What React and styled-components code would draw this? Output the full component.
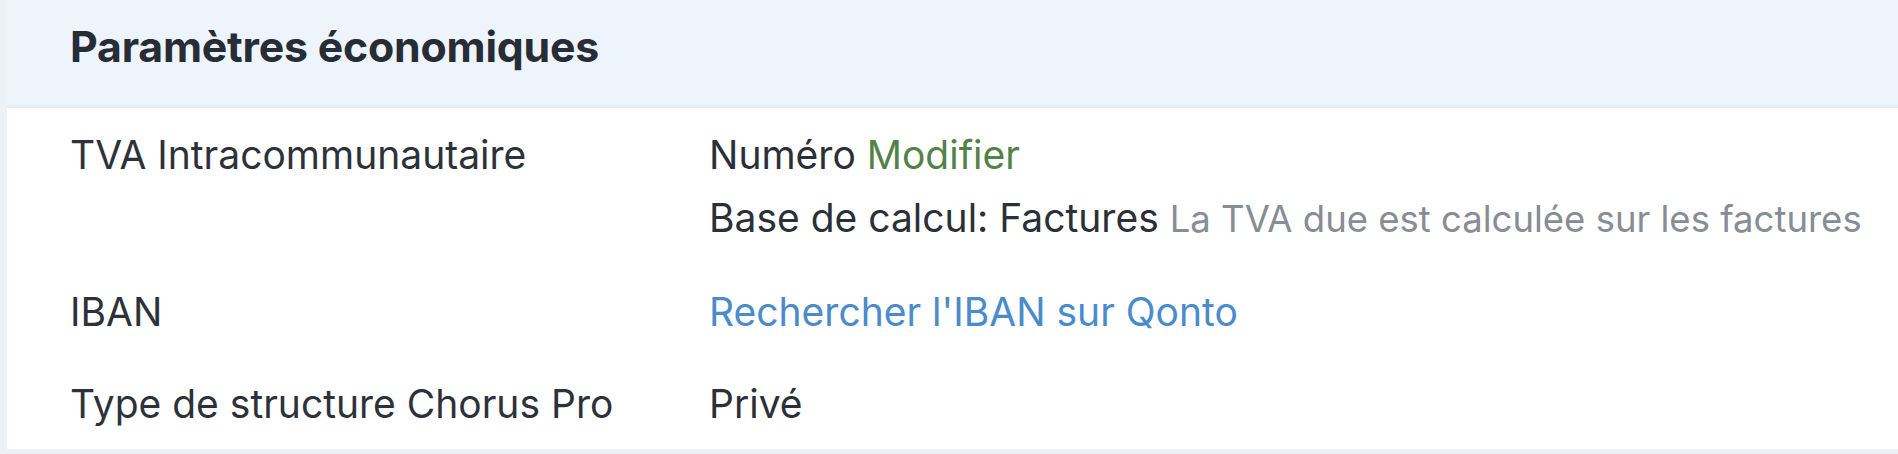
import styled, { createGlobalStyle } from 'styled-components';

const GlobalStyle = createGlobalStyle`
  html, body {
    margin: 0;
    padding: 0;
    background: #ffffff;
  }

  body {
    font-family: Inter, "Noto Sans", sans-serif;
    -webkit-font-smoothing: antialiased;
  }
`;

const Page = styled.div`
  display: flex;
  width: 1898px;
  height: 454px;
  box-sizing: border-box;
  padding: 0 0 5px 7px;
  background-color: #eef2f7;
`;

const Card = styled.section`
  display: flex;
  flex: 1;
  flex-direction: column;
  background-color: #fff;
`;

const Header = styled.header`
  flex-shrink: 0;
  height: 108px;
  box-sizing: border-box;
  padding: 15px 63px 0;
  border-bottom: 3px solid #e6edf5;
  background-color: #edf4fc;
`;

const Title = styled.h2`
  margin: 0;
  color: #272c35;
  font-size: 42.8px;
  font-weight: 700;
  line-height: 63px;
  letter-spacing: -0.2px;
`;

const Rows = styled.div`
  display: flex;
  flex-direction: column;
`;

const Row = styled.div`
  display: grid;
  grid-template-columns: 639px 1fr;
  padding: 14.5px 63px;
  font-size: 39px;
  line-height: 63px;
`;

const Label = styled.div`
  color: #2d323a;
`;

const Value = styled.div`
  display: flex;
  flex-direction: column;
  color: #2b3038;
`;

const Line = styled.p`
  margin: 0;
  white-space: nowrap;
`;

const Link = styled.a`
  color: ${({ tone }) => (tone === 'green' ? '#538248' : '#4a8bcb')};
  text-decoration: none;
  cursor: pointer;
`;

const Hint = styled.span`
  color: #878c95;
  font-size: 36.5px;
`;

export default function App() {
  return (
    <>
      <GlobalStyle />
      <Page>
        <Card>
          <Header>
            <Title>Paramètres économiques</Title>
          </Header>

          <Rows>
            <Row>
              <Label>TVA Intracommunautaire</Label>
              <Value>
                <Line>
                  Numéro <Link tone="green">Modifier</Link>
                </Line>
                <Line>
                  Base de calcul: Factures <Hint>La TVA due est calculée sur les factures</Hint>
                </Line>
              </Value>
            </Row>

            <Row>
              <Label>IBAN</Label>
              <Value>
                <Line>
                  <Link>Rechercher l'IBAN sur Qonto</Link>
                </Line>
              </Value>
            </Row>

            <Row>
              <Label>Type de structure Chorus Pro</Label>
              <Value>
                <Line>Privé</Line>
              </Value>
            </Row>
          </Rows>
        </Card>
      </Page>
    </>
  );
}
